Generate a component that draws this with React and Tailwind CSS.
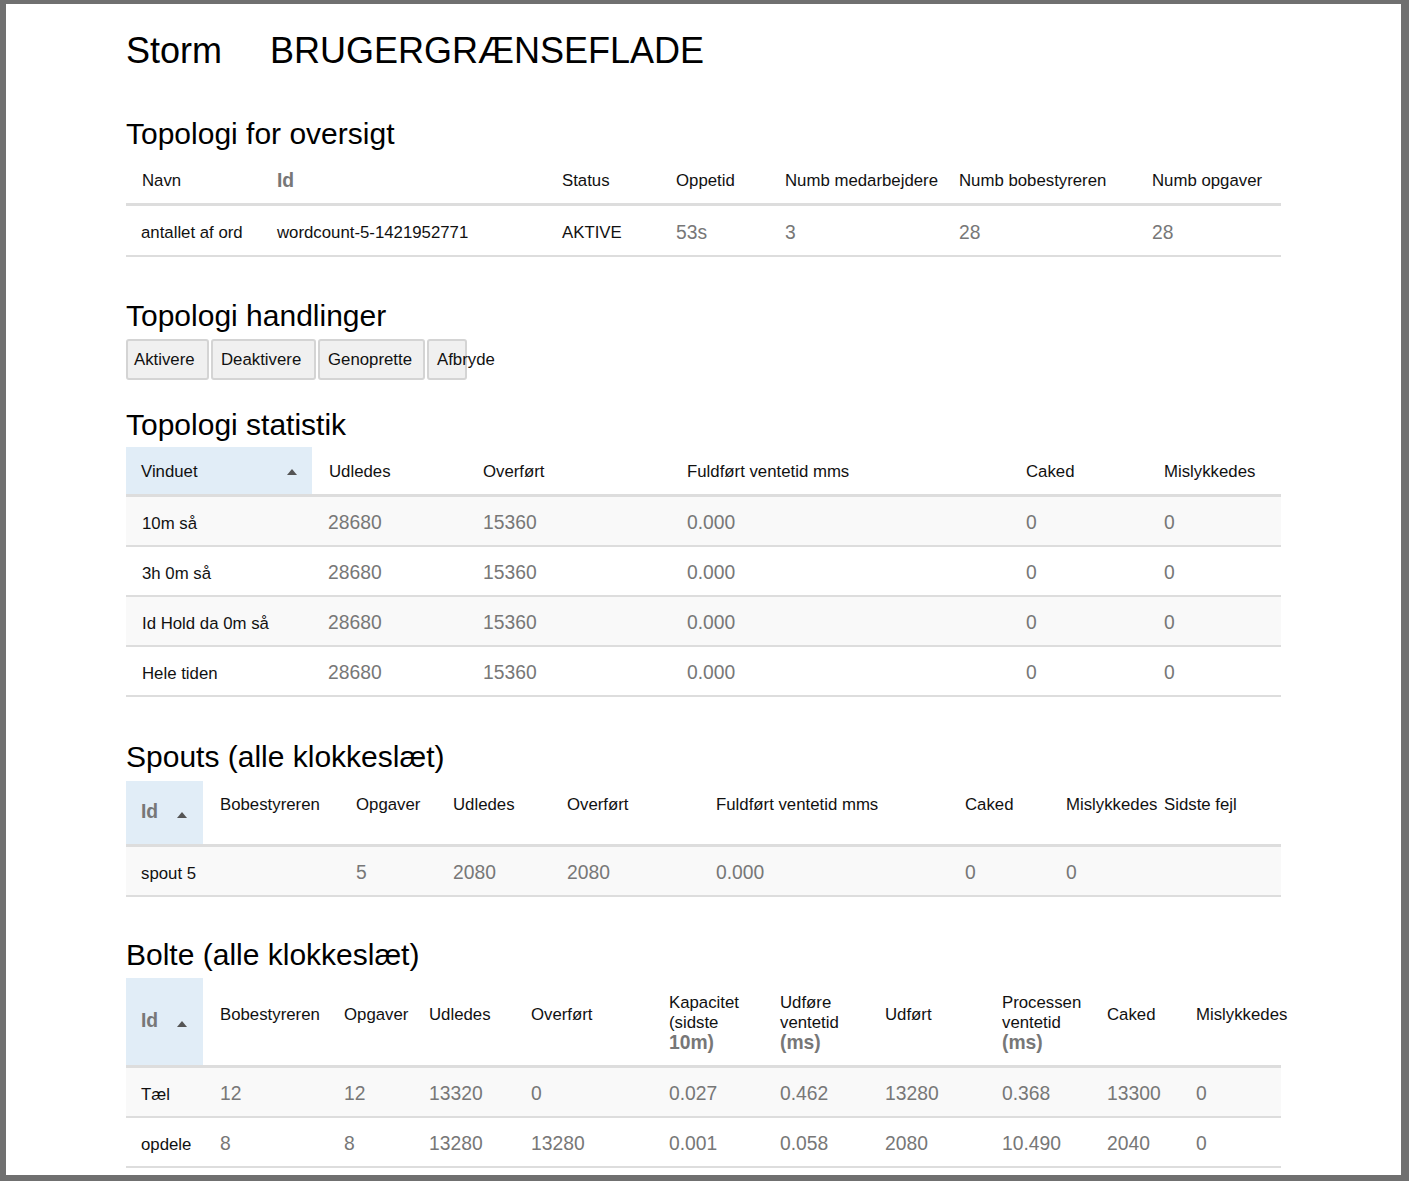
import React from "react";

const Tri = () => (
  <svg width="10" height="6" viewBox="0 0 10 6" className="shrink-0">
    <path d="M0 6 L5 0 L10 6 Z" fill="#555" />
  </svg>
);

const N = ({ children }) => (
  <span className="text-[19.3px] text-[#777] whitespace-nowrap">{children}</span>
);
const T = ({ children }) => (
  <span className="text-[16.8px] text-[#111] whitespace-nowrap">{children}</span>
);
const B = ({ children }) => (
  <span className="text-[19.3px] font-bold text-[#777] whitespace-nowrap">{children}</span>
);

function Cell({ w, children, className = "" }) {
  return (
    <div className={"shrink-0 overflow-visible " + className} style={{ width: w }}>
      {children}
    </div>
  );
}

function H2({ children, className = "" }) {
  return (
    <h2 className={"text-[30px] leading-[33px] text-black font-normal " + className}>{children}</h2>
  );
}

export default function App() {
  const ovW = [151, 285, 114, 109, 174, 193, 129];
  const stW = [186, 171, 204, 339, 138, 117];
  const spW = [77, 153, 97, 114, 149, 249, 101, 98, 117];
  const boW = [77, 141, 85, 102, 138, 111, 105, 117, 105, 89, 85];

  const statRows = ["10m så", "3h 0m så", "Id Hold da 0m så", "Hele tiden"];

  return (
    <div className="w-[1409px] h-[1181px] box-border border-l-[6px] border-t-[4px] border-r-[8px] border-b-[6px] border-[#707070] bg-white overflow-hidden font-['Liberation_Sans',Arial,sans-serif]">
      <div className="pl-[120px] w-[1275px]">
        {/* H1 */}
        <h1 className="mt-[27px] flex text-[36px] leading-[40px] text-black font-normal">
          <span className="w-[144px] shrink-0">Storm</span>
          <span>BRUGERGRÆNSEFLADE</span>
        </h1>

        {/* Overview */}
        <H2 className="mt-[46px]">Topologi for oversigt</H2>
        <div className="mt-[9px] w-[1155px]">
          <div className="flex items-center h-[47px] border-b-[3px] border-[#ddd]">
            <Cell w={ovW[0]} className="pl-[16px]"><T>Navn</T></Cell>
            <Cell w={ovW[1]}><B>Id</B></Cell>
            <Cell w={ovW[2]}><T>Status</T></Cell>
            <Cell w={ovW[3]}><T>Oppetid</T></Cell>
            <Cell w={ovW[4]}><T>Numb medarbejdere</T></Cell>
            <Cell w={ovW[5]}><T>Numb bobestyreren</T></Cell>
            <Cell w={ovW[6]}><T>Numb opgaver</T></Cell>
          </div>
          <div className="flex items-center pt-[5px] h-[51px] border-b-2 border-[#ddd]">
            <Cell w={ovW[0]} className="pl-[15px]"><T>antallet af ord</T></Cell>
            <Cell w={ovW[1]}><T>wordcount-5-1421952771</T></Cell>
            <Cell w={ovW[2]}><T>AKTIVE</T></Cell>
            <Cell w={ovW[3]}><N>53s</N></Cell>
            <Cell w={ovW[4]}><N>3</N></Cell>
            <Cell w={ovW[5]}><N>28</N></Cell>
            <Cell w={ovW[6]}><N>28</N></Cell>
          </div>
        </div>

        {/* Actions */}
        <H2 className="mt-[42px]">Topologi handlinger</H2>
        <div className="mt-[7px] flex gap-[2px] h-[41px]">
          {[
            ["Aktivere", 83, "pl-[6px]"],
            ["Deaktivere", 105, "pl-[8px]"],
            ["Genoprette", 107, "pl-[8px]"],
            ["Afbryde", 40, "pl-[8px]"],
          ].map(([t, w, p]) => (
            <button
              key={t}
              className={"h-[41px] shrink-0 text-left overflow-visible whitespace-nowrap bg-[#f0f0f0] border-2 border-[#d4d4d4] rounded-[3px] text-[16.8px] text-[#111] " + p}
              style={{ width: w }}
            >
              {t}
            </button>
          ))}
        </div>

        {/* Stats */}
        <H2 className="mt-[28px]">Topologi statistik</H2>
        <div className="mt-[6px] w-[1155px]">
          <div className="flex items-stretch h-[50px] border-b-[3px] border-[#ddd]">
            <Cell w={stW[0]} className="pl-[15px] pr-[15px] pt-[3px] bg-[#e1edf7] flex items-center justify-between">
              <T>Vinduet</T>
              <Tri />
            </Cell>
            <Cell w={stW[1]} className="pl-[17px] pt-[3px] flex items-center"><T>Udledes</T></Cell>
            <Cell w={stW[2]} className="pt-[3px] flex items-center"><T>Overført</T></Cell>
            <Cell w={stW[3]} className="pt-[3px] flex items-center"><T>Fuldført ventetid mms</T></Cell>
            <Cell w={stW[4]} className="pt-[3px] flex items-center"><T>Caked</T></Cell>
            <Cell w={stW[5]} className="pt-[3px] flex items-center"><T>Mislykkedes</T></Cell>
          </div>
          {statRows.map((r, i) => (
            <div
              key={r}
              className={"flex items-center pt-[5px] h-[50px] border-b-2 border-[#ddd] " + (i % 2 === 0 ? "bg-[#f9f9f9]" : "bg-white")}
            >
              <Cell w={stW[0]} className="pl-[16px]"><T>{r}</T></Cell>
              <Cell w={stW[1]} className="pl-[16px]"><N>28680</N></Cell>
              <Cell w={stW[2]}><N>15360</N></Cell>
              <Cell w={stW[3]}><N>0.000</N></Cell>
              <Cell w={stW[4]}><N>0</N></Cell>
              <Cell w={stW[5]}><N>0</N></Cell>
            </div>
          ))}
        </div>

        {/* Spouts */}
        <H2 className="mt-[43px]">Spouts (alle klokkeslæt)</H2>
        <div className="mt-[8px] w-[1155px]">
          <div className="flex items-stretch h-[66px] border-b-[3px] border-[#ddd]">
            <Cell w={spW[0]} className="pl-[15px] bg-[#e1edf7] flex items-center">
              <B>Id</B>
              <span className="ml-[19px] mt-[4px] flex"><Tri /></span>
            </Cell>
            {[
              ["Bobestyreren", "pl-[17px]"],
              ["Opgaver", ""],
              ["Udledes", ""],
              ["Overført", ""],
              ["Fuldført ventetid mms", ""],
              ["Caked", ""],
              ["Mislykkedes", ""],
              ["Sidste fejl", ""],
            ].map(([t, p], i) => (
              <Cell key={t} w={spW[i + 1]} className={"pt-[14px] leading-[20px] " + p}>
                <T>{t}</T>
              </Cell>
            ))}
          </div>
          <div className="flex items-center pt-[5px] h-[50px] border-b-2 border-[#ddd] bg-[#f9f9f9]">
            <Cell w={spW[0]} className="pl-[15px]"><T>spout 5</T></Cell>
            <Cell w={spW[1]}></Cell>
            <Cell w={spW[2]}><N>5</N></Cell>
            <Cell w={spW[3]}><N>2080</N></Cell>
            <Cell w={spW[4]}><N>2080</N></Cell>
            <Cell w={spW[5]}><N>0.000</N></Cell>
            <Cell w={spW[6]}><N>0</N></Cell>
            <Cell w={spW[7]}><N>0</N></Cell>
            <Cell w={spW[8]}></Cell>
          </div>
        </div>

        {/* Bolts */}
        <H2 className="mt-[41px]">Bolte (alle klokkeslæt)</H2>
        <div className="mt-[7px] w-[1155px]">
          <div className="flex items-stretch h-[90px] border-b-[3px] border-[#ddd]">
            <Cell w={boW[0]} className="pl-[15px] bg-[#e1edf7] flex items-center">
              <B>Id</B>
              <span className="ml-[19px] mt-[4px] flex"><Tri /></span>
            </Cell>
            <Cell w={boW[1]} className="pl-[17px] pt-[27px] leading-[20px]"><T>Bobestyreren</T></Cell>
            <Cell w={boW[2]} className="pt-[27px] leading-[20px]"><T>Opgaver</T></Cell>
            <Cell w={boW[3]} className="pt-[27px] leading-[20px]"><T>Udledes</T></Cell>
            <Cell w={boW[4]} className="pt-[27px] leading-[20px]"><T>Overført</T></Cell>
            <Cell w={boW[5]} className="pt-[15px] leading-[20px] flex flex-col">
              <T>Kapacitet</T>
              <T>(sidste</T>
              <B>10m)</B>
            </Cell>
            <Cell w={boW[6]} className="pt-[15px] leading-[20px] flex flex-col">
              <T>Udføre</T>
              <T>ventetid</T>
              <B>(ms)</B>
            </Cell>
            <Cell w={boW[7]} className="pt-[27px] leading-[20px]"><T>Udført</T></Cell>
            <Cell w={boW[8]} className="pt-[15px] leading-[20px] flex flex-col">
              <T>Processen</T>
              <T>ventetid</T>
              <B>(ms)</B>
            </Cell>
            <Cell w={boW[9]} className="pt-[27px] leading-[20px]"><T>Caked</T></Cell>
            <Cell w={boW[10]} className="pt-[27px] leading-[20px]"><T>Mislykkedes</T></Cell>
          </div>
          {[
            ["Tæl", "12", "12", "13320", "0", "0.027", "0.462", "13280", "0.368", "13300", "0"],
            ["opdele", "8", "8", "13280", "13280", "0.001", "0.058", "2080", "10.490", "2040", "0"],
          ].map((row, ri) => (
            <div
              key={row[0]}
              className={"flex items-center pt-[5px] h-[50px] border-b-2 border-[#ddd] " + (ri % 2 === 0 ? "bg-[#f9f9f9]" : "bg-white")}
            >
              {row.map((v, ci) => (
                <Cell
                  key={ci}
                  w={boW[ci]}
                  className={ci === 0 ? "pl-[15px]" : ci === 1 ? "pl-[17px]" : ""}
                >
                  {ci === 0 ? <T>{v}</T> : <N>{v}</N>}
                </Cell>
              ))}
            </div>
          ))}
        </div>
      </div>
    </div>
  );
}
